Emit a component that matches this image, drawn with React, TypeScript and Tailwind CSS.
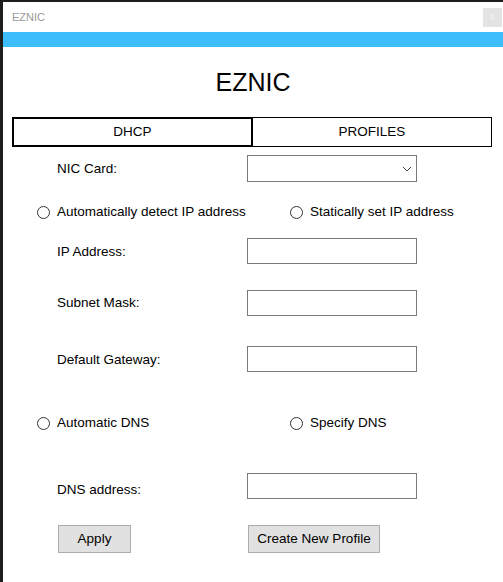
export default function App() {
    const font = { fontFamily: '"Liberation Sans", Arial, sans-serif' };

    const TextRow = ({ label, mt, labelOffset = 0 }: { label: string; mt: string; labelOffset?: number }) => (
        <div className={`flex items-center pl-[54px] ${mt}`}>
            <div className="w-[190px] text-[13.5px] text-black leading-none" style={{ paddingTop: labelOffset }}>
                {label}
            </div>
            <div className="w-[170px] h-[26px] border border-[#7a7a7a] bg-white" />
        </div>
    );

    const Radio = ({ label }: { label: string }) => (
        <div className="flex items-center">
            <span className="w-[13px] h-[13px] rounded-full border border-[#333333] bg-white" />
            <span className="ml-[7px] text-[13.5px] text-black leading-none">{label}</span>
        </div>
    );

    return (
        <div className="w-[503px] h-[582px] bg-[#1e1e1e] pt-[2px] pl-[3px] overflow-hidden" style={font}>
            <div className="w-[500px] h-[580px] bg-white flex flex-col">
                {/* title bar */}
                <div className="h-[30px] flex items-center justify-between">
                    <span className="pl-[9px] text-[11px] text-[#9a9a9a]">EZNIC</span>
                    <div className="w-[19px] h-[19px] mr-[1px] bg-[#e3e3e3] flex items-center justify-center text-[10px] text-[#f4f4f4] leading-none">
                        x
                    </div>
                </div>
                <div className="h-[15px] bg-[#3dbdf9]" />

                {/* heading */}
                <div className="h-[70px] pt-[23px] text-center">
                    <h1 className="text-[25px] leading-none text-black">EZNIC</h1>
                </div>

                {/* tabs */}
                <div className="flex h-[30px] ml-[9px] mr-[11px]">
                    <div className="w-[241px] border-2 border-black flex items-center justify-center text-[13.5px] text-black">
                        DHCP
                    </div>
                    <div className="flex-1 border border-black border-l-0 flex items-center justify-center text-[13.5px] text-black">
                        PROFILES
                    </div>
                </div>

                {/* NIC card */}
                <div className="flex items-center pl-[54px] mt-[8px]">
                    <div className="w-[190px] text-[13.5px] text-black leading-none">NIC Card:</div>
                    <div className="w-[170px] h-[27px] border border-[#7a7a7a] bg-white flex items-center justify-end pr-[4px]">
                        <svg width="10" height="6" viewBox="0 0 10 6" fill="none">
                            <path d="M1 1l4 4 4-4" stroke="#444444" strokeWidth="1" />
                        </svg>
                    </div>
                </div>

                {/* IP mode */}
                <div className="flex items-center h-[18px] mt-[21px] pl-[34px]">
                    <div className="w-[253px]">
                        <Radio label="Automatically detect IP address" />
                    </div>
                    <Radio label="Statically set IP address" />
                </div>

                <TextRow label="IP Address:" mt="mt-[17px]" labelOffset={2} />
                <TextRow label="Subnet Mask:" mt="mt-[26px]" />
                <TextRow label="Default Gateway:" mt="mt-[30px]" labelOffset={2} />

                {/* DNS mode */}
                <div className="flex items-center h-[18px] mt-[42px] pl-[34px]">
                    <div className="w-[253px]">
                        <Radio label="Automatic DNS" />
                    </div>
                    <Radio label="Specify DNS" />
                </div>

                <TextRow label="DNS address:" mt="mt-[41px]" labelOffset={7} />

                {/* actions */}
                <div className="flex mt-[26px] pl-[55px]">
                    <button className="w-[73px] h-[28px] bg-[#e1e1e1] border border-[#adadad] text-[13.5px] text-black">
                        Apply
                    </button>
                    <button className="ml-[117px] w-[132px] h-[28px] bg-[#e1e1e1] border border-[#adadad] text-[13.5px] text-black">
                        Create New Profile
                    </button>
                </div>
            </div>
        </div>
    );
}
